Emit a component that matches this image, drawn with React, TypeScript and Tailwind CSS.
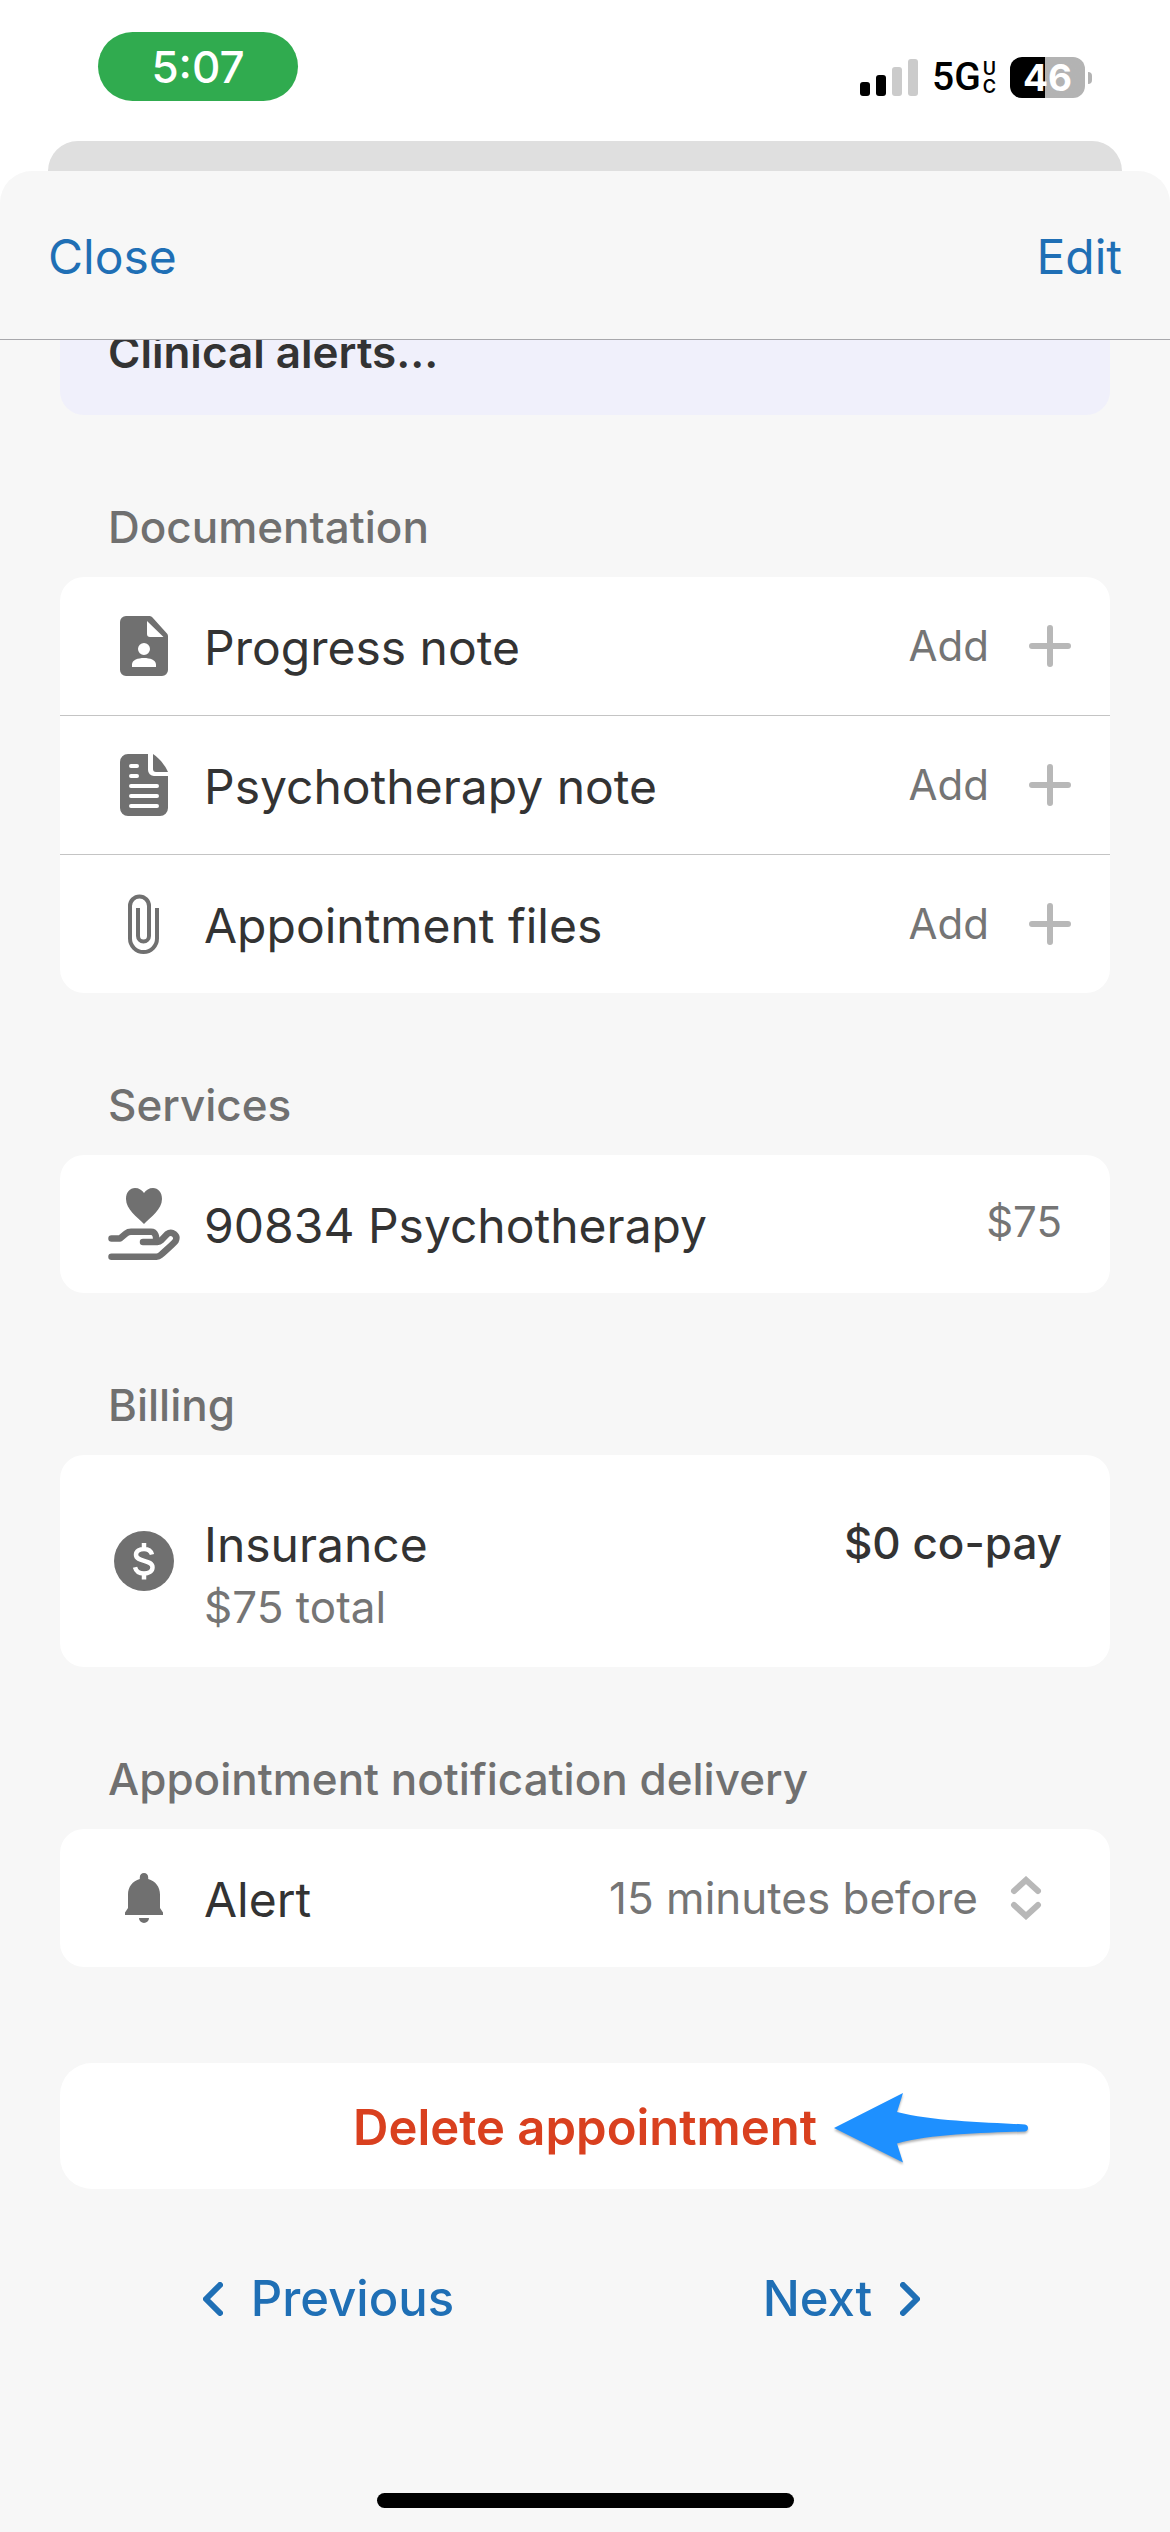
import { type ReactNode } from "react";

interface SectionProps {
  title: string;
  children: ReactNode;
}

interface RowProps {
  icon: ReactNode;
  label: string;
  children?: ReactNode;
}

function PersonFileIcon() {
  return (
    <svg width="48" height="60" viewBox="0 0 48 60" fill="currentColor" aria-hidden="true">
      <path
        fillRule="evenodd"
        d="M6 0h23c1.500 0 2.600.5 3.500 1.500l14 15.500c1 1 1.500 2 1.500 3.500V54a6 6 0 0 1-6 6H6a6 6 0 0 1-6-6V6a6 6 0 0 1 6-6ZM27 5v13a3 3 0 0 0 3 3h13.500ZM24 27a6 6 0 1 0 0 12 6 6 0 0 0 0-12ZM12 51h24v-2.500c0-4.500-6-6.500-12-6.500s-12 2-12 6.500Z"
      />
    </svg>
  );
}

function TextFileIcon() {
  return (
    <svg width="48" height="62" viewBox="0 0 48 62" fill="currentColor" aria-hidden="true">
      <path d="M8 0h20v16a6 6 0 0 0 6 6h14v32a8 8 0 0 1-8 8H8a8 8 0 0 1-8-8V8a8 8 0 0 1 8-8Z" />
      <path d="M33 0c6 4 12 11 15 18H36a3 3 0 0 1-3-3Z" />
      <path
        d="M11 12h6M11 22h6M11 32h26M11 42h26M11 52h26"
        stroke="#fff"
        strokeWidth="4"
        strokeLinecap="round"
      />
    </svg>
  );
}

function PaperclipIcon() {
  return (
    <svg
      width="32"
      height="60"
      viewBox="0 0 32 60"
      fill="none"
      stroke="currentColor"
      strokeWidth="4"
      aria-hidden="true"
    >
      <path d="M29 14v30.500a13.500 13.500 0 0 1-27 0V12a9.500 9.500 0 0 1 19 0v30a5.500 5.500 0 0 1-11 0V14" />
    </svg>
  );
}

function HandHeartIcon() {
  return (
    <svg width="72" height="74" viewBox="0 0 72 74" aria-hidden="true">
      <path
        fill="currentColor"
        d="M36 37C29 30 18 22 18 12 18 5 22 1 27 1c4 0 7 2 9 5 2-3 5-5 9-5 5 0 9 4 9 11 0 10-11 18-18 25Z"
      />
      <path
        fill="none"
        stroke="currentColor"
        strokeWidth="6.500"
        strokeLinecap="round"
        strokeLinejoin="round"
        d="M3.500 51.500H12l6-5c1.500-1.200 3-1.700 5-1.700h20c4.500 0 6 5 4.500 10.200H35h14.500c1.500 0 2.500-.5 3.500-1.500l6-6.300c5-3.700 11.500 1 8.500 7-1 1.800-12 11.300-15 14-1.300 1.200-2.500 1.600-4 1.600h-45"
      />
    </svg>
  );
}

function DollarIcon() {
  return (
    <svg width="60" height="60" viewBox="0 0 60 60" aria-hidden="true">
      <circle cx="30" cy="30" r="30" fill="currentColor" />
      <path
        d="M38 23.500c-1-3.500-4-5.500-8-5.500s-8 2-8 5.800c0 7.800 16.500 4.300 16.500 12.400 0 4-4 6.300-8.500 6.300s-8-2.500-9-6.300M30 12v6m0 24.500v6"
        fill="none"
        stroke="#fff"
        strokeWidth="4.500"
      />
    </svg>
  );
}

function BellIcon() {
  return (
    <svg width="38" height="50" viewBox="0 0 38 50" fill="currentColor" aria-hidden="true">
      <path d="M19 0c2.500 0 4.200 1.700 4.200 4.200V6C30.500 8 35 14 35 21.500V35l3 4.500V42H0v-2.500L3 35V21.500C3 14 7.500 8 14.800 6V4.200C14.800 1.700 16.500 0 19 0ZM14 45h10a5 5 0 0 1-10 0Z" />
    </svg>
  );
}

function PlusIcon() {
  return (
    <svg width="42" height="42" viewBox="0 0 42 42" aria-hidden="true">
      <path d="M21 3v36M3 21h36" stroke="#b8b8b8" strokeWidth="6" strokeLinecap="round" />
    </svg>
  );
}

function UpDownIcon() {
  return (
    <svg
      width="32"
      height="44"
      viewBox="0 0 32 44"
      fill="none"
      stroke="#b8b8b8"
      strokeWidth="6"
      strokeLinecap="round"
      aria-hidden="true"
    >
      <path d="M4 15 16 4l12 11M4 29l12 11 12-11" />
    </svg>
  );
}

function ChevronIcon({ direction }: { direction: "left" | "right" }) {
  return (
    <svg
      width="20"
      height="34"
      viewBox="0 0 20 34"
      fill="none"
      stroke="currentColor"
      strokeWidth="6"
      strokeLinecap="round"
      strokeLinejoin="round"
      aria-hidden="true"
    >
      <path d={direction === "left" ? "M17 3 3 17l14 14" : "M3 3l14 14L3 31"} />
    </svg>
  );
}

function ArrowMarker() {
  return (
    <svg
      width="194"
      height="70"
      viewBox="0 0 194 70"
      fill="#1e90ff"
      className="overflow-visible drop-shadow-[0_2px_1px_rgba(0,0,0,0.3)]"
      aria-hidden="true"
    >
      <path d="M0 35 69 0l-6 19c35 9 84 10 128 12.500 4 .5 4 6.500 0 7-44 1.500-93 2.500-128 12l6 19Z" />
    </svg>
  );
}

function StatusBar() {
  return (
    <div className="flex h-[141px] items-start justify-between pt-8 pr-[78px] pl-[98px]">
      <div className="flex h-[69px] w-[200px] items-center justify-center rounded-full bg-[#30ab4f] text-[44px] font-medium text-white">
        5:07
      </div>
      <div className="mt-[25px] flex h-[41px] items-center gap-[14px]">
        <svg width="58" height="37" viewBox="0 0 58 37" aria-label="Signal strength">
          <rect x="0" y="23" width="10" height="14" rx="3" />
          <rect x="16" y="16" width="10" height="21" rx="3" />
          <rect x="32" y="8" width="10" height="29" rx="3" fill="#cbcbcb" />
          <rect x="48" y="0" width="10" height="37" rx="3" fill="#cbcbcb" />
        </svg>
        <div className="flex items-center gap-[2px] text-black">
          <span className="font-[Roboto,sans-serif] text-[39px] font-medium">5G</span>
          <span className="flex flex-col text-[18px] leading-[18px] font-semibold">
            <span>U</span>
            <span>C</span>
          </span>
        </div>
        <div className="flex items-center gap-[3px]">
          <div className="flex h-[41px] w-[75px] items-center justify-center rounded-xl bg-linear-to-r from-black from-47% to-[#b3b3b3] to-47% text-[37px] font-bold text-white">
            46
          </div>
          <div className="h-3 w-1 rounded-r-full bg-[#b3b3b3]" />
        </div>
      </div>
    </div>
  );
}

function Section({ title, children }: SectionProps) {
  return (
    <section className="pt-[82px]">
      <h2 className="mb-5 px-12 text-[44px] leading-[60px] font-medium text-[#707070]">{title}</h2>
      <div className="overflow-hidden rounded-[24px] bg-white">{children}</div>
    </section>
  );
}

function Row({ icon, label, children }: RowProps) {
  return (
    <div className="box-content flex h-[138px] items-center border-b border-[#c4c4c4] px-12 last:border-b-0">
      <div className="flex w-[72px] shrink-0 justify-center text-[#707070]">{icon}</div>
      <div className="ml-6 flex-1 pt-1 text-[48px] leading-[60px] text-[#333333]">{label}</div>
      {children}
    </div>
  );
}

function AddButton({ label }: { label: string }) {
  return (
    <button
      type="button"
      aria-label={`Add ${label}`}
      className="-mr-[9px] flex items-center gap-10 text-[42px] leading-[60px] text-[#757575]"
    >
      Add
      <PlusIcon />
    </button>
  );
}

const documents = [
  { label: "Progress note", icon: <PersonFileIcon /> },
  { label: "Psychotherapy note", icon: <TextFileIcon /> },
  { label: "Appointment files", icon: <PaperclipIcon /> },
];

export default function App() {
  return (
    <div className="flex min-h-screen flex-col bg-white font-[Inter,sans-serif]">
      <StatusBar />
      <div className="mx-12 h-[30px] rounded-t-[30px] bg-[#dfdfdf]" />

      <div className="flex flex-1 flex-col rounded-t-[32px] bg-[#f7f7f7]">
        <header className="flex h-[169px] items-center justify-between border-b border-[#a8a8ac] px-12 pt-1 text-[48px] text-[#1f6fb5]">
          <button type="button">Close</button>
          <button type="button">Edit</button>
        </header>

        <main className="px-[60px]">
          {/* Alerts card, scrolled partly under the header */}
          <div className="flex h-[75px] items-end overflow-hidden">
            <div className="w-full shrink-0 rounded-[24px] bg-[#f0f0fb] px-12 py-[33px] text-[44px] leading-[60px] font-semibold text-[#333333]">
              Clinical alerts...
            </div>
          </div>

          <Section title="Documentation">
            {documents.map((doc) => (
              <Row key={doc.label} icon={doc.icon} label={doc.label}>
                <AddButton label={doc.label} />
              </Row>
            ))}
          </Section>

          <Section title="Services">
            <Row icon={<HandHeartIcon />} label="90834 Psychotherapy">
              <span className="pb-1 text-[42px] leading-[60px] text-[#757575]">$75</span>
            </Row>
          </Section>

          <Section title="Billing">
            <div className="flex h-[212px] items-center px-12">
              <div className="flex w-[72px] shrink-0 justify-center text-[#707070]">
                <DollarIcon />
              </div>
              <div className="ml-6 flex-1 pt-7">
                <div className="flex items-start justify-between text-[#333333]">
                  <span className="text-[48px] leading-[64px]">Insurance</span>
                  <span className="text-[44px] leading-[60px] font-medium">$0 co-pay</span>
                </div>
                <p className="text-[44px] leading-[60px] text-[#757575]">$75 total</p>
              </div>
            </div>
          </Section>

          <Section title="Appointment notification delivery">
            <div className="flex h-[138px] items-center pr-[68px] pl-12">
              <div className="flex w-[72px] shrink-0 justify-center text-[#707070]">
                <BellIcon />
              </div>
              <label
                htmlFor="alert"
                className="ml-6 flex-1 pt-1 text-[48px] leading-[60px] text-[#333333]"
              >
                Alert
              </label>
              <select
                id="alert"
                defaultValue="15"
                className="mr-8 appearance-none text-right text-[44px] leading-[60px] text-[#757575] [field-sizing:content]"
              >
                <option value="15">15 minutes before</option>
              </select>
              <UpDownIcon />
            </div>
          </Section>

          <div className="relative mt-24">
            <button
              type="button"
              className="h-[126px] w-full rounded-[32px] bg-white pt-1 text-[49px] font-semibold text-[#d9401f]"
            >
              Delete appointment
            </button>
            <div className="pointer-events-none absolute top-[30px] right-[82px]">
              <ArrowMarker />
            </div>
          </div>
        </main>

        <nav className="grid grid-cols-2 px-[72px] pt-20 text-[49px] leading-[60px] font-medium text-[#1f6fb5]">
          <a href="#previous" className="flex items-center justify-center gap-7">
            <ChevronIcon direction="left" />
            Previous
          </a>
          <a href="#next" className="flex items-center justify-center gap-7">
            Next
            <ChevronIcon direction="right" />
          </a>
        </nav>

        <div className="mt-auto flex justify-center pb-6">
          <div className="h-[15px] w-[417px] rounded-full bg-black" />
        </div>
      </div>
    </div>
  );
}
